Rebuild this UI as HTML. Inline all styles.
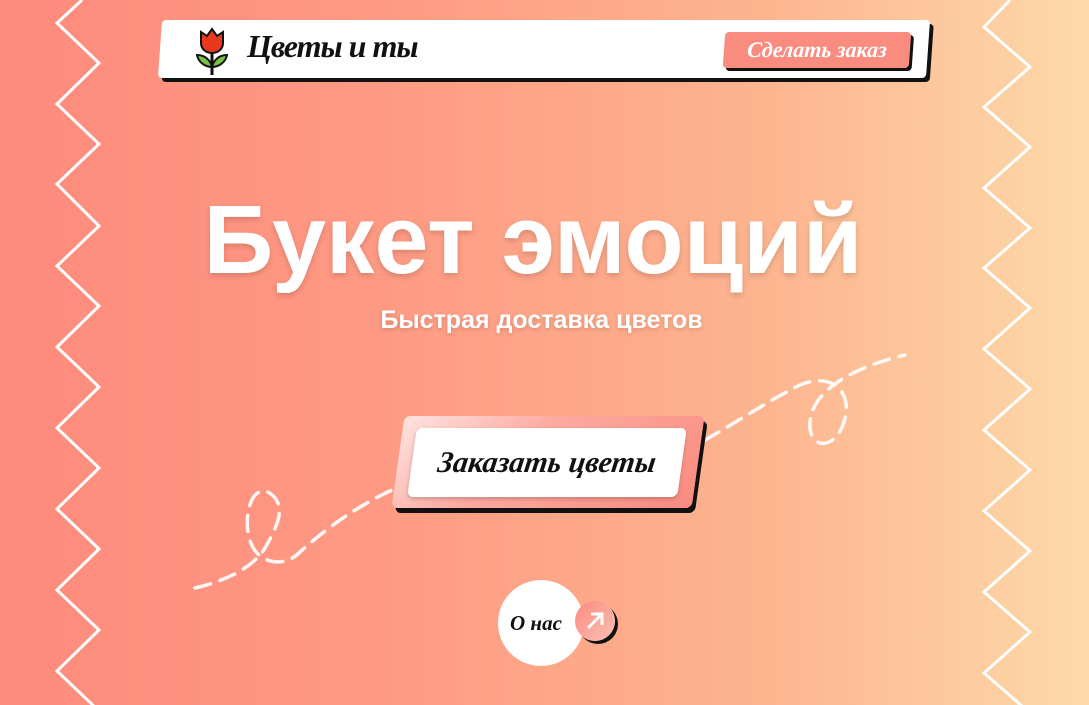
<!DOCTYPE html>
<html><head><meta charset="utf-8"><style>
*{margin:0;padding:0;box-sizing:border-box}
body{width:1089px;height:705px;overflow:hidden;position:relative;background:linear-gradient(90deg,#fe8a7c 0%,#fe9a83 35%,#fdb48f 70%,#fdd9a9 100%);font-family:"Liberation Sans",sans-serif}
.hdr{position:absolute;left:160px;top:20px;width:768px;height:58px;background:#fff;transform:skewX(-4deg);border-radius:4px;box-shadow:4px 4px 0 #111}
.logo{position:absolute;left:247px;top:28px;font:italic bold 32px "Liberation Serif",serif;color:#111;letter-spacing:-1px}
.btn1{position:absolute;left:724px;top:32px;width:186px;height:36px;background:#f98b7f;transform:skewX(-4deg);border-radius:4px;box-shadow:3px 3px 0 #111;color:#fff;font:italic bold 22px "Liberation Serif",serif;text-align:center;line-height:36px}
h1{position:absolute;left:0;width:1066px;top:184px;text-align:center;color:#fff;font:bold 97px "Liberation Sans",sans-serif;letter-spacing:0;text-shadow:0 3px 6px rgba(0,0,0,.15)}
.sub{position:absolute;left:0;width:1083px;top:306px;text-align:center;color:#fff;font:bold 25px "Liberation Sans Narrow","Liberation Sans",sans-serif;text-shadow:0 2px 4px rgba(0,0,0,.15)}
.big{position:absolute;left:398px;top:416px;width:300px;height:92px;transform:skewX(-8deg);background:linear-gradient(135deg,#ffe3e0 0%,#fca9a0 40%,#f98b7f 100%);border-radius:6px;box-shadow:4px 5px 0 #111}
.inner{position:absolute;left:412px;top:428px;width:270px;height:69px;background:#fff;transform:skewX(-8deg);border-radius:6px;box-shadow:0 2px 4px rgba(0,0,0,.2);font:italic bold 30px "Liberation Serif",serif;color:#111;text-align:center;line-height:69px}
.c1{position:absolute;left:498px;top:580px;width:86px;height:86px;border-radius:50%;background:#fff;font:italic bold 21px "Liberation Serif",serif;color:#111;line-height:86px;padding-left:12px}
.c2{position:absolute;left:575px;top:601px;width:40px;height:40px;border-radius:50%;background:linear-gradient(135deg,#fb8a7e,#fdc0b5);box-shadow:3px 3px 0 #111}
</style></head><body>
<svg width="1089" height="705" style="position:absolute;left:0;top:0">
<polyline fill="none" stroke="#fff" stroke-width="3" points="82,0 57,23 99,63 57,104 99,144 57,184 99,226 57,266 99,306 57,347 99,387 57,428 99,468 57,509 99,549 57,590 99,630 57,671 99,711"/>
<polyline fill="none" stroke="#fff" stroke-width="3" points="1010,0 984,27 1030,67 984,107 1030,147 984,188 1030,228 984,268 1030,308 984,349 1030,389 984,430 1030,470 984,511 1030,551 984,592 1030,632 984,673 1030,713"/>
<g fill="none" stroke="#fff" stroke-width="3.5" stroke-dasharray="16 10" stroke-linecap="round" opacity=".92">
<path d="M195,588 C230,580 255,565 265,548 C275,530 290,505 268,492 C250,485 243,520 250,540 C257,565 285,568 300,552 C330,525 360,505 392,490"/>
<path d="M705,440 C740,420 770,400 800,385 C830,372 852,390 845,418 C838,450 808,452 810,422 C812,392 850,368 905,355"/>
</g>
</svg>
<div class="hdr"></div>
<svg width="36" height="50" viewBox="0 0 36 50" style="position:absolute;left:194px;top:27px">
<line x1="18" y1="22" x2="18" y2="48" stroke="#111" stroke-width="3"/>
<path d="M18,40 C10,40 4,34 3,28 C10,28 16,32 18,40Z" fill="#7cc242" stroke="#111" stroke-width="2"/>
<path d="M18,40 C26,40 32,34 33,28 C26,28 20,32 18,40Z" fill="#7cc242" stroke="#111" stroke-width="2"/>
<path d="M7,5 L13,9 L18,2 L23,9 L29,5 L29,16 C29,22 24,26 18,26 C12,26 7,22 7,16Z" fill="#e8391f" stroke="#111" stroke-width="2"/>
</svg>
<div class="logo">Цветы и ты</div>
<div class="btn1">Сделать заказ</div>
<h1>Букет эмоций</h1>
<div class="sub">Быстрая доставка цветов</div>
<div class="big"></div>
<div class="inner">Заказать цветы</div>
<div class="c1">О нас</div>
<div class="c2"><svg width="40" height="40"><path d="M13,27 L27,13 M16,13 L27,13 L27,24" fill="none" stroke="#fff" stroke-width="3"/></svg></div>
</body></html>
